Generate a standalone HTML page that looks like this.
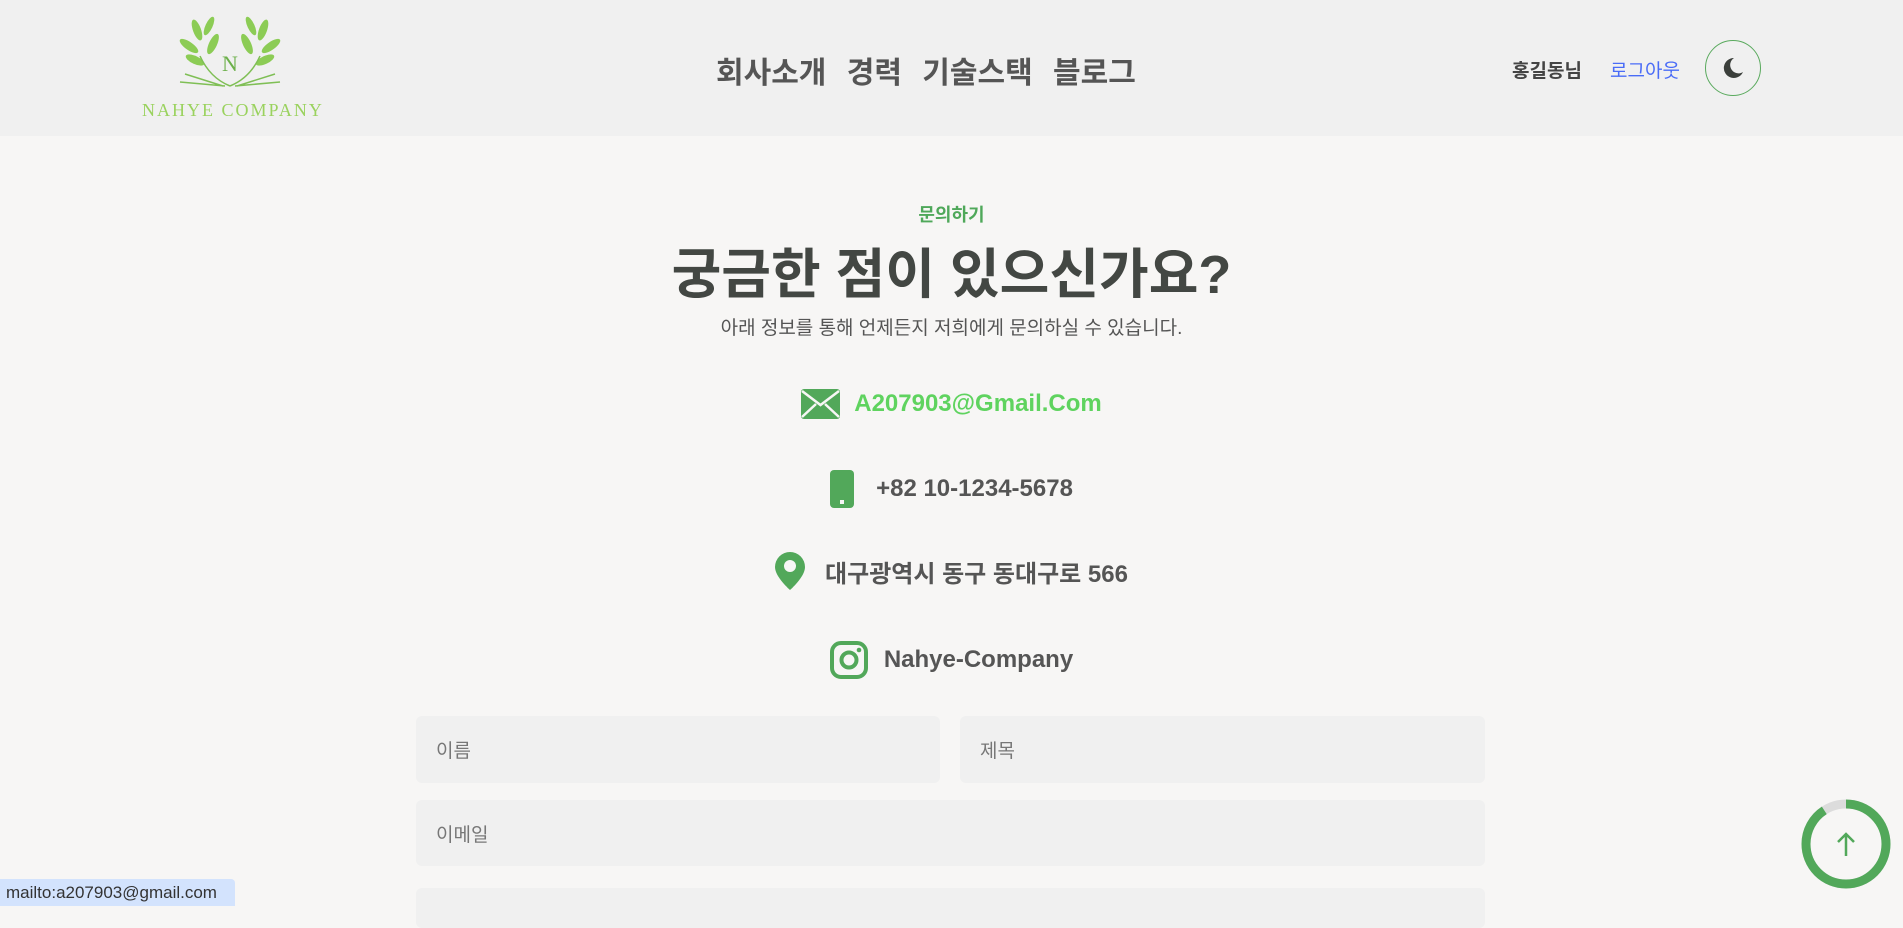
<!DOCTYPE html>
<html><head><meta charset="utf-8"><style>
*{margin:0;padding:0;box-sizing:border-box}
body{width:1903px;height:906px;overflow:hidden;background:#f7f6f5;font-family:"Liberation Sans","Noto Sans CJK KR",sans-serif;position:relative;color:#444}
.hdr{position:absolute;left:0;top:0;width:1903px;height:136px;background:#f0f0f0}
.abs{position:absolute;white-space:nowrap}
.nav{left:716px;top:48px;font-size:30px;font-weight:bold;color:#555;word-spacing:12px}
.c{left:0;width:1903px;text-align:center}
.row{position:absolute;left:0;width:1903px;display:flex;justify-content:center;align-items:center;gap:14px;font-size:24px;font-weight:bold;color:#555}
.inp{position:absolute;background:#f0f0f0;border-radius:6px;font-size:19px;color:#777;padding-left:20px;display:flex;align-items:center}
</style></head><body>
<div class="hdr"></div>
<svg class="abs" style="left:175px;top:16px" width="110" height="80" viewBox="0 0 110 80">
<g fill="#8ccc55">
<ellipse cx="22" cy="14" rx="4" ry="11" transform="rotate(-20 22 14)"/>
<ellipse cx="34" cy="10" rx="3.5" ry="10" transform="rotate(25 34 10)"/>
<ellipse cx="14" cy="30" rx="4" ry="11" transform="rotate(-55 14 30)"/>
<ellipse cx="38" cy="28" rx="4" ry="11" transform="rotate(25 38 28)"/>
<ellipse cx="20" cy="44" rx="4" ry="10" transform="rotate(-65 20 44)"/>
<ellipse cx="88" cy="14" rx="4" ry="11" transform="rotate(20 88 14)"/>
<ellipse cx="76" cy="10" rx="3.5" ry="10" transform="rotate(-25 76 10)"/>
<ellipse cx="96" cy="30" rx="4" ry="11" transform="rotate(55 96 30)"/>
<ellipse cx="72" cy="28" rx="4" ry="11" transform="rotate(-25 72 28)"/>
<ellipse cx="90" cy="44" rx="4" ry="10" transform="rotate(65 90 44)"/>
</g>
<path d="M25 40 Q35 62 55 70 M85 40 Q75 62 55 70 M5 66 L50 70 M105 66 L60 70 M10 58 L48 70 M100 58 L62 70" stroke="#7fbf55" stroke-width="1.5" fill="none"/>
<text x="55" y="55" text-anchor="middle" font-family="Liberation Serif" font-size="22" fill="#6cb04a">N</text>
</svg>
<div class="abs" style="left:142px;top:100px;font-family:'Liberation Serif',serif;font-size:18px;color:#9ad25e;letter-spacing:2px">NAHYE COMPANY</div>
<div class="abs nav">회사소개 경력 기술스택 블로그</div>
<div class="abs" style="left:1512px;top:56px;font-size:19px;font-weight:bold;color:#444">홍길동님</div>
<div class="abs" style="left:1610px;top:56px;font-size:19px;color:#4a6cf7">로그아웃</div>
<div class="abs" style="left:1705px;top:40px;width:56px;height:56px;border:1.5px solid #5aaa5e;border-radius:50%"></div>
<svg class="abs" style="left:1721px;top:56px" width="24" height="24" viewBox="0 0 24 24"><path d="M13 2A10 10 0 1 0 22 16 8 8 0 0 1 13 2Z" fill="#3b3f3b"/></svg>
<div class="abs c" style="top:201px;font-size:18px;font-weight:bold;color:#4fa85a">문의하기</div>
<div class="abs c" style="top:230px;font-size:54px;font-weight:bold;color:#434743">궁금한 점이 있으신가요?</div>
<div class="abs c" style="top:313px;font-size:19px;color:#555">아래 정보를 통해 언제든지 저희에게 문의하실 수 있습니다.</div>
<div class="row" style="top:384px;height:40px"><svg width="39" height="30" viewBox="0 0 39 30"><rect width="39" height="30" rx="3" fill="#52a85a"/><path d="M1 2 L19.5 16 L38 2 M1 28 L15 15 M38 28 L24 15" stroke="#f7f6f5" stroke-width="2.5" fill="none"/></svg><span style="color:#5fd35f">A207903@Gmail.Com</span></div>
<div class="row" style="top:469px;height:40px;gap:22px"><svg width="24" height="38" viewBox="0 0 24 38"><rect width="24" height="38" rx="4" fill="#52a85a"/><rect x="10" y="30" width="4" height="4" fill="#f7f6f5"/></svg><span>+82 10-1234-5678</span></div>
<div class="row" style="top:551px;height:40px;gap:20px"><svg width="30" height="38" viewBox="0 0 30 38"><path d="M15 0A15 15 0 0 0 0 15C0 25 15 38 15 38S30 25 30 15A15 15 0 0 0 15 0Z" fill="#52a85a"/><circle cx="15" cy="14" r="6" fill="#f7f6f5"/></svg><span>대구광역시 동구 동대구로 566</span></div>
<div class="row" style="top:640px;height:40px;gap:16px"><svg width="38" height="38" viewBox="0 0 38 38"><rect x="2" y="2" width="34" height="34" rx="9" fill="none" stroke="#52a85a" stroke-width="4"/><circle cx="19" cy="19" r="7.5" fill="none" stroke="#52a85a" stroke-width="4"/><circle cx="29" cy="9" r="2.3" fill="#52a85a"/></svg><span>Nahye-Company</span></div>
<div class="inp" style="left:416px;top:716px;width:524px;height:67px">이름</div>
<div class="inp" style="left:960px;top:716px;width:525px;height:67px">제목</div>
<div class="inp" style="left:416px;top:800px;width:1069px;height:66px">이메일</div>
<div class="inp" style="left:416px;top:888px;width:1069px;height:40px"></div>
<div class="abs" style="left:0;top:879px;width:235px;height:27px;background:#d3e3fd;border-radius:0 4px 0 0;font-size:17px;color:#333;padding:4px 0 0 6px">mailto:a207903@gmail.com</div>
<svg class="abs" style="left:1800px;top:798px" width="92" height="92" viewBox="0 0 92 92"><circle cx="46" cy="46" r="44" fill="#f7f6f5"/><circle cx="46" cy="46" r="40" fill="none" stroke="#dcdcdc" stroke-width="9"/><circle cx="46" cy="46" r="40" fill="none" stroke="#52a85a" stroke-width="9" stroke-dasharray="228 252" transform="rotate(-90 46 46)"/><path d="M46 58V36M38 44L46 36 54 44" stroke="#52a85a" stroke-width="2.5" fill="none"/></svg>
</body></html>
